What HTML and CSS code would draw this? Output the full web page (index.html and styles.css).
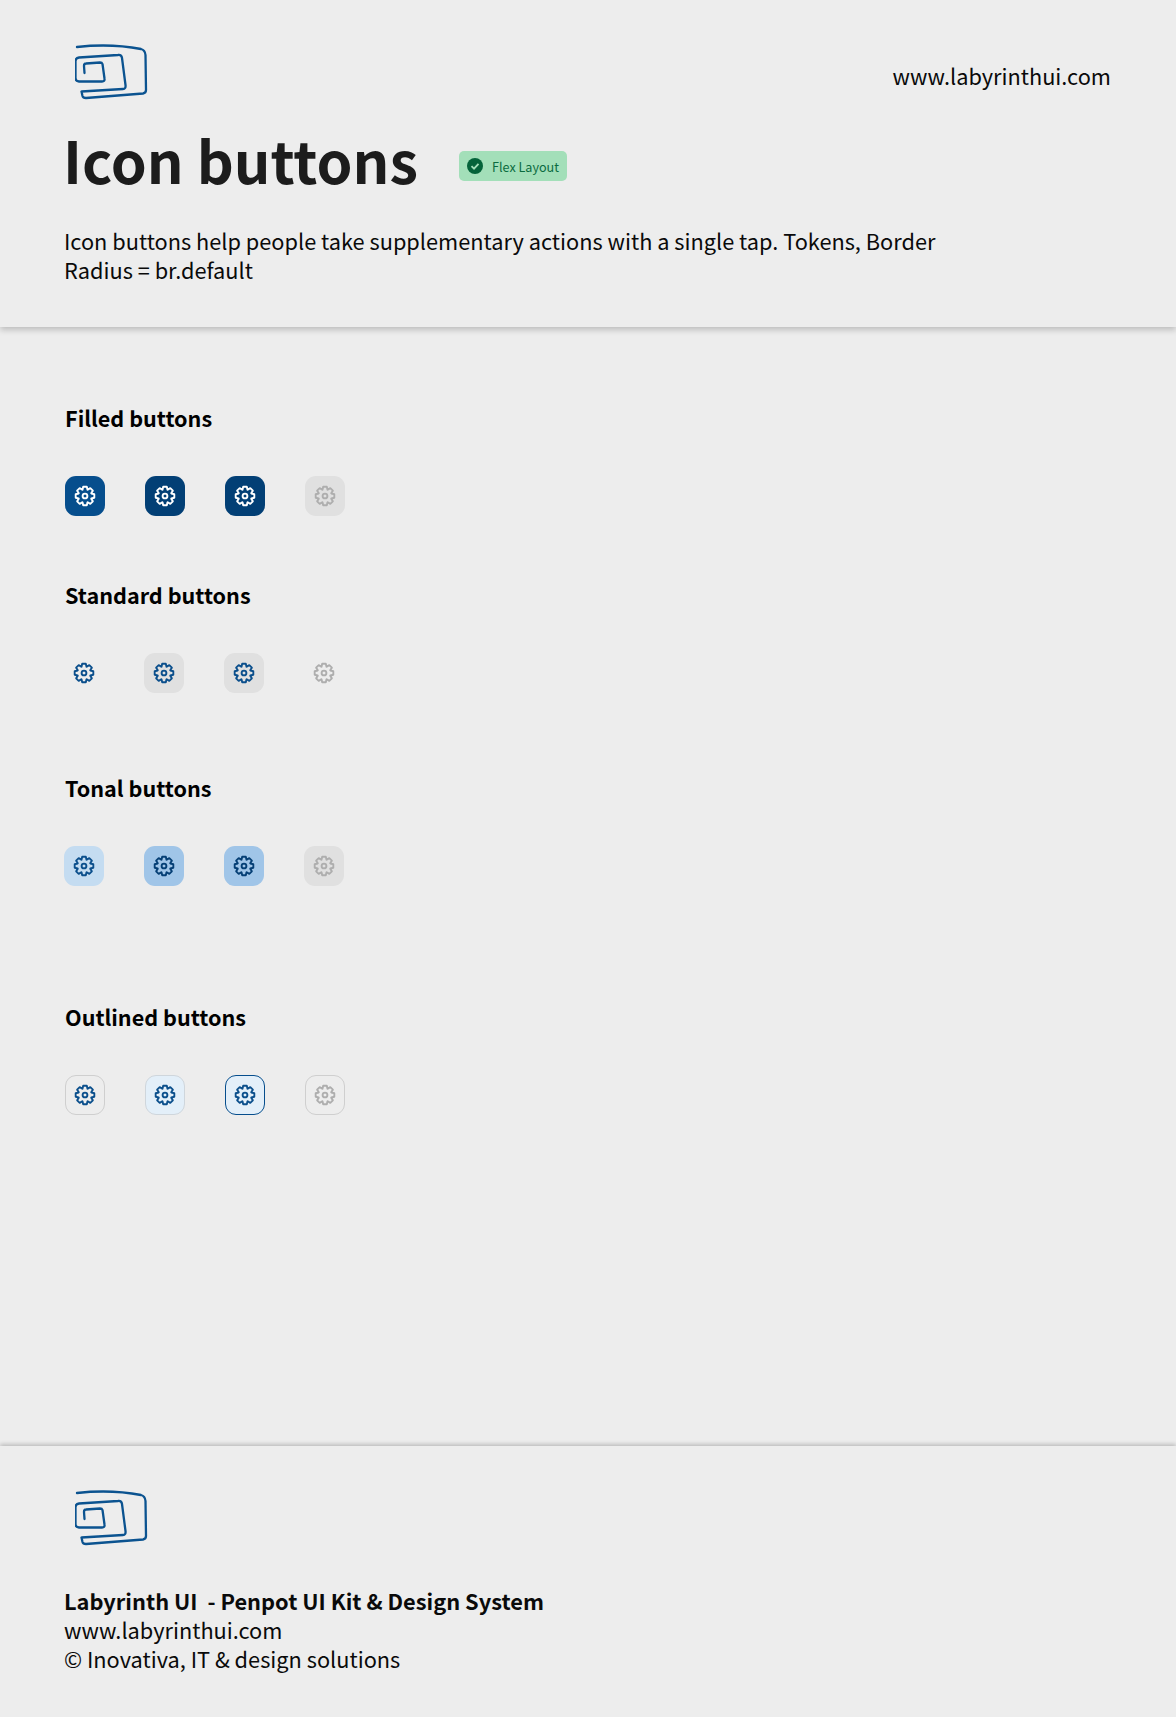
FILE: index.html
```html
<!DOCTYPE html>
<html lang="en">
<head>
  <meta charset="UTF-8">
  <title>Icon buttons</title>
  <link rel="stylesheet" href="styles.css">
</head>
<body>
  <svg class="defs" width="0" height="0">
    <symbol id="gear" viewBox="-12 -12 24 24">
      <polygon points="6.3,-2.5 9.3,-1.8 9.3,1.8 6.3,2.5 6.22,2.69 7.85,5.3 5.3,7.85 2.69,6.22 2.5,6.3 1.8,9.3 -1.8,9.3 -2.5,6.3 -2.69,6.22 -5.3,7.85 -7.85,5.3 -6.22,2.69 -6.3,2.5 -9.3,1.8 -9.3,-1.8 -6.3,-2.5 -6.22,-2.69 -7.85,-5.3 -5.3,-7.85 -2.69,-6.22 -2.5,-6.3 -1.8,-9.3 1.8,-9.3 2.5,-6.3 2.69,-6.22 5.3,-7.85 7.85,-5.3 6.22,-2.69"/>
      <circle cx="0" cy="0" r="2.4"/>
    </symbol>
    <symbol id="logo" viewBox="0 0 74 58">
      <path d="M2 3 C20 1 45 1 66 5 Q70 6 70.500 11 L71 46 Q71 49 68 49.500 L11 54 Q8 54 7.500 52 L6.500 47.500 L48 45 Q51 45 50.500 41 L47 14 Q46.500 10.500 43 11 L4 13.500 Q0.500 14 0.500 17 L0.500 34 Q0.500 37.500 4 37.500 L27 37.500 Q30 37.500 29.500 34.500 L27.500 20 Q27 18.500 25 18.500 L11 19.500 Q9 19.500 9 22 L9.500 29"/>
    </symbol>
  </svg>

  <!-- Header -->
  <header class="page-header">
    <div class="brand-row">
      <svg class="logo"><use href="#logo"/></svg>
      <span class="site-link">www.labyrinthui.com</span>
    </div>
    <div class="title-row">
      <h1>Icon buttons</h1>
      <span class="badge">
        <svg class="badge-icon" viewBox="0 0 16 16">
          <circle cx="8" cy="8" r="8"/>
          <path d="M4.500 8.200 L7 10.700 L11.500 5.800"/>
        </svg>
        Flex Layout
      </span>
    </div>
    <p class="intro">Icon buttons help people take supplementary actions with a single tap. Tokens, Border Radius = br.default</p>
  </header>

  <!-- Button groups -->
  <main class="content">
    <section class="group group-filled">
      <h2>Filled buttons</h2>
      <div class="btn-row">
        <button class="icon-btn filled"><svg><use href="#gear"/></svg></button>
        <button class="icon-btn filled-hover"><svg><use href="#gear"/></svg></button>
        <button class="icon-btn filled-hover"><svg><use href="#gear"/></svg></button>
        <button class="icon-btn disabled"><svg><use href="#gear"/></svg></button>
      </div>
    </section>

    <section class="group group-standard">
      <h2>Standard buttons</h2>
      <div class="btn-row shifted">
        <button class="icon-btn standard"><svg><use href="#gear"/></svg></button>
        <button class="icon-btn standard-hover"><svg><use href="#gear"/></svg></button>
        <button class="icon-btn standard-hover"><svg><use href="#gear"/></svg></button>
        <button class="icon-btn standard-disabled"><svg><use href="#gear"/></svg></button>
      </div>
    </section>

    <section class="group group-tonal">
      <h2>Tonal buttons</h2>
      <div class="btn-row shifted">
        <button class="icon-btn tonal"><svg><use href="#gear"/></svg></button>
        <button class="icon-btn tonal-hover"><svg><use href="#gear"/></svg></button>
        <button class="icon-btn tonal-hover"><svg><use href="#gear"/></svg></button>
        <button class="icon-btn disabled"><svg><use href="#gear"/></svg></button>
      </div>
    </section>

    <section class="group group-outlined">
      <h2>Outlined buttons</h2>
      <div class="btn-row">
        <button class="icon-btn outlined"><svg><use href="#gear"/></svg></button>
        <button class="icon-btn outlined-hover"><svg><use href="#gear"/></svg></button>
        <button class="icon-btn outlined-focus"><svg><use href="#gear"/></svg></button>
        <button class="icon-btn outlined-disabled"><svg><use href="#gear"/></svg></button>
      </div>
    </section>
  </main>

  <!-- Footer -->
  <footer class="page-footer">
    <svg class="logo"><use href="#logo"/></svg>
    <div class="footer-text">
      <strong>Labyrinth UI &nbsp;- Penpot UI Kit &amp; Design System</strong>
      <span>www.labyrinthui.com</span>
      <span>© Inovativa, IT &amp; design solutions</span>
    </div>
  </footer>
</body>
</html>
```

FILE: styles.css
```css
body {
  background-color: #ededed;
  color: #0a0a0a;
  font-family: 'Noto Sans CJK SC', 'Noto Sans', sans-serif;
  margin: 0;
  height: 1717px;
  display: flex;
  flex-direction: column;
}
.defs {
  position: absolute;
}
.logo {
  display: block;
  width: 74px;
  height: 58px;
  margin-left: 11px;
  fill: none;
  stroke: #0b5390;
  stroke-width: 2.300;
  stroke-linejoin: round;
  stroke-linecap: round;
}
/* Header */
.page-header {
  height: 327px;
  box-sizing: border-box;
  padding: 44px 65px 0 64px;
  box-shadow: 0 3px 6px rgba(0,0,0,0.2);
}
.brand-row {
  display: flex;
  justify-content: space-between;
  align-items: flex-start;
}
.site-link {
  font-size: 21.75px;
  line-height: 30px;
  margin-top: 17px;
}
.title-row {
  display: flex;
  align-items: center;
  margin-top: 22px;
}
h1 {
  margin: 0 0 0 -1px;
  font-size: 57.6px;
  line-height: 70px;
  font-weight: 700;
  color: #1c1c1c;
}
.badge {
  display: flex;
  align-items: center;
  gap: 9px;
  margin: 14px 0 0 41px;
  padding: 0 8px;
  height: 30px;
  background-color: #a3dfb9;
  border-radius: 5px;
  font-size: 12.6px;
  color: #0b6b3f;
}
.badge-icon {
  width: 16px;
  height: 16px;
  fill: #05633a;
}
.badge-icon path {
  fill: none;
  stroke: #a3dfb9;
  stroke-width: 1.8;
}
.intro {
  margin: 32px 0 0;
  max-width: 900px;
  font-size: 21.75px;
  line-height: 29px;
}
/* Button groups */
.content {
  flex: 1;
  padding-left: 65px;
}
.group h2 {
  margin: 0;
  font-size: 21.6px;
  line-height: 30px;
  font-weight: 700;
  color: #000000;
}
.btn-row {
  display: flex;
  gap: 40px;
  margin-top: 43px;
}
.btn-row.shifted {
  margin-left: -1px;
}
.group-filled {
  margin-top: 76px;
}
.group-standard {
  margin-top: 64px;
}
.group-tonal {
  margin-top: 80px;
}
.group-outlined {
  margin-top: 116px;
}
.icon-btn {
  display: flex;
  align-items: center;
  justify-content: center;
  box-sizing: border-box;
  width: 40px;
  height: 40px;
  padding: 0;
  border: none;
  border-radius: 11px;
  background: none;
  color: #0b4f8c;
}
.icon-btn svg {
  width: 24px;
  height: 24px;
  fill: none;
  stroke: currentColor;
  stroke-width: 1.900;
  stroke-linejoin: round;
}
.filled {
  background-color: #064e8d;
  color: #ffffff;
}
.filled-hover {
  background-color: #023f75;
  color: #ffffff;
}
.disabled {
  background-color: #e0e0e0;
  color: #aeaeae;
}
.standard-hover {
  background-color: #e0e0e0;
}
.standard-disabled {
  color: #aeaeae;
}
.tonal {
  background-color: #c4dcf1;
}
.tonal-hover {
  background-color: #a0c5e8;
  color: #053f75;
}
.outlined {
  border: 1px solid #cfcfcf;
}
.outlined-hover {
  border: 1px solid #cfd6dc;
  background-color: #e3eff9;
}
.outlined-focus {
  border: 1px solid #064e8d;
  background-color: #e3eff9;
}
.outlined-disabled {
  border: 1px solid #cfcfcf;
  color: #aeaeae;
}
/* Footer */
.page-footer {
  height: 271px;
  box-sizing: border-box;
  padding: 44px 65px 0 64px;
  box-shadow: 0 -2px 4px rgba(0,0,0,0.2);
}
.footer-text {
  display: flex;
  flex-direction: column;
  margin-top: 38px;
  font-size: 21.75px;
  line-height: 29px;
}
.footer-text strong {
  font-size: 21.8px;
  font-weight: 700;
}
```
